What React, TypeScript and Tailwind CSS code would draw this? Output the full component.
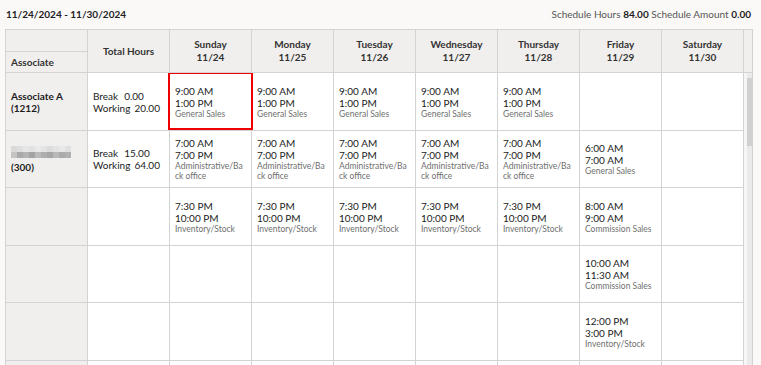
import React from "react";

type Shift = { start: string; end: string; cat: string[] };
type Row = {
  h: number;
  assoc?: { name?: string; id: string; blurred?: boolean };
  total?: { brk: string; work: string };
  cells: (Shift | null)[];
};

const days = [
  ["Sunday", "11/24"],
  ["Monday", "11/25"],
  ["Tuesday", "11/26"],
  ["Wednesday", "11/27"],
  ["Thursday", "11/28"],
  ["Friday", "11/29"],
  ["Saturday", "11/30"],
];

const gs: Shift = { start: "9:00 AM", end: "1:00 PM", cat: ["General Sales"] };
const adm: Shift = { start: "7:00 AM", end: "7:00 PM", cat: ["Administrative/Ba", "ck office"] };
const inv: Shift = { start: "7:30 PM", end: "10:00 PM", cat: ["Inventory/Stock"] };

const rows: Row[] = [
  {
    h: 58,
    assoc: { name: "Associate A", id: "(1212)" },
    total: { brk: "0.00", work: "20.00" },
    cells: [gs, gs, gs, gs, gs, null, null],
  },
  {
    h: 57,
    assoc: { id: "(300)", blurred: true },
    total: { brk: "15.00", work: "64.00" },
    cells: [adm, adm, adm, adm, adm, { start: "6:00 AM", end: "7:00 AM", cat: ["General Sales"] }, null],
  },
  {
    h: 58,
    cells: [inv, inv, inv, inv, inv, { start: "8:00 AM", end: "9:00 AM", cat: ["Commission Sales"] }, null],
  },
  {
    h: 57,
    cells: [null, null, null, null, null, { start: "10:00 AM", end: "11:30 AM", cat: ["Commission Sales"] }, null],
  },
  {
    h: 58,
    cells: [null, null, null, null, null, { start: "12:00 PM", end: "3:00 PM", cat: ["Inventory/Stock"] }, null],
  },
  { h: 57, cells: [null, null, null, null, null, null, null] },
];

const topShades = ["#d9d9d9", "#dedede", "#e6e6e6", "#e2e2e2", "#e9e9e9", "#e4e4e4", "#dcdcdc", "#e3e3e3", "#e8e8e8", "#e0e0e0"];
const botShades = ["#c4c4c4", "#a9a9a9", "#b3b3b3", "#a3a3a3", "#bababa", "#aeaeae", "#a6a6a6", "#b8b8b8", "#ababab", "#b1b1b1"];

function Blurred() {
  return (
    <div className="flex flex-col w-[60px] h-[12px] blur-[0.5px] mb-[3px]">
      <div className="flex h-[6px]">
        {topShades.map((c, i) => (
          <div key={i} className="w-[6px] h-full" style={{ background: c }} />
        ))}
      </div>
      <div className="flex h-[6px]">
        {botShades.map((c, i) => (
          <div key={i} className="w-[6px] h-full" style={{ background: c }} />
        ))}
      </div>
    </div>
  );
}

export default function App() {
  return (
    <div className="min-h-[365px] bg-[#faf9f8] font-['Lato',sans-serif] text-[#1c1c1c]">
      <div className="h-[29px] flex items-center justify-between pl-[6px] pr-[10px]">
        <div className="text-[10px] font-bold text-[#222]">11/24/2024 - 11/30/2024</div>
        <div className="text-[10px] text-[#555]">
          Schedule Hours <span className="font-bold text-[#1c1c1c]">84.00</span> Schedule Amount{" "}
          <span className="font-bold text-[#1c1c1c]">0.00</span>
        </div>
      </div>

      <div className="ml-[5px] w-[748px] border border-[#d3d3d3] border-b-0">
        {/* header */}
        <div className="flex h-[43px] bg-[#f1efed] border-b border-[#d3d3d3]">
          <div className="grid grid-cols-[repeat(9,82px)] w-[738px] text-[10px] font-bold text-[#333]">
            <div className="flex flex-col border-r border-[#d3d3d3]">
              <div className="h-[22px] border-b border-[#d3d3d3]" />
              <div className="flex-1 flex items-center pl-[5px]">Associate</div>
            </div>
            <div className="flex items-center justify-center border-r border-[#d3d3d3]">Total Hours</div>
            {days.map(([d, dt]) => (
              <div
                key={d}
                className="flex flex-col items-center justify-center leading-[13px] border-r border-[#d3d3d3]"
              >
                <div>{d}</div>
                <div>{dt}</div>
              </div>
            ))}
          </div>
          <div className="flex-1" />
        </div>

        {/* body */}
        <div className="flex h-[293px] overflow-hidden">
          <div className="w-[738px] flex flex-col">
            {rows.map((r, ri) => (
              <div
                key={ri}
                className="grid grid-cols-[repeat(9,82px)] border-b border-[#d3d3d3] shrink-0"
                style={{ height: r.h }}
              >
                <div className="bg-[#f1efed] border-r border-[#d3d3d3] flex flex-col justify-center pl-[5px] text-[10px] font-bold leading-[12px]">
                  {r.assoc && (
                    <>
                      {r.assoc.blurred ? <Blurred /> : <div>{r.assoc.name}</div>}
                      <div>{r.assoc.id}</div>
                    </>
                  )}
                </div>
                <div className="bg-white border-r border-[#d3d3d3] flex flex-col justify-center pl-[5px] text-[10px] leading-[12px]">
                  {r.total && (
                    <>
                      <div>
                        Break<span className="ml-[6px]">{r.total.brk}</span>
                      </div>
                      <div>
                        Working<span className="ml-[4px]">{r.total.work}</span>
                      </div>
                    </>
                  )}
                </div>
                {r.cells.map((c, ci) => (
                  <div
                    key={ci}
                    className="relative bg-white border-r border-[#d3d3d3] flex flex-col justify-center px-[5px]"
                  >
                    {c && (
                      <>
                        <div className="text-[10px] leading-[12px]">{c.start}</div>
                        <div className="text-[10px] leading-[12px]">{c.end}</div>
                        <div className="text-[8.5px] leading-[10px] text-[#6f6f6f]">
                          {c.cat.map((l, li) => (
                            <div key={li}>{l}</div>
                          ))}
                        </div>
                      </>
                    )}
                    {ri === 0 && ci === 0 && (
                      <div className="absolute z-10 -left-[2px] -right-[2px] -top-[1px] bottom-0 border-2 border-[#ee0000]" />
                    )}
                  </div>
                ))}
              </div>
            ))}
          </div>
          <div className="flex-1 bg-[#f6f6f6] flex">
            <div className="ml-[3px] w-[5px] bg-[#eaeaea] flex flex-col pt-[5px]">
              <div className="h-[68px] bg-[#d0d0d0]" />
            </div>
          </div>
        </div>
      </div>
    </div>
  );
}
